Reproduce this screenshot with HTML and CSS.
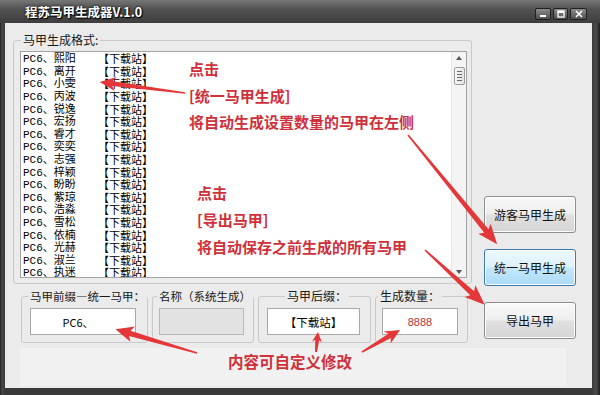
FILE: index.html
```html
<!DOCTYPE html>
<html lang="zh-CN">
<head>
  <meta charset="UTF-8" />
  <title>程苏马甲生成器V.1.0</title>
  <link rel="stylesheet" href="styles.css">
</head>
<body>

  <div class="window">
    <div class="titlebar">
      <span class="title">程苏马甲生成器V.1.0</span>
      <div class="caption">
        <span class="cap min"><svg width="8" height="8" viewBox="0 0 8 8"><rect x="1" y="5" width="6" height="2" fill="#fff"/></svg></span>
        <span class="cap max"><svg width="8" height="8" viewBox="0 0 8 8"><rect x="1" y="1" width="6" height="6" fill="none" stroke="#fff" stroke-width="1.3"/><rect x="1" y="1" width="6" height="2" fill="#fff"/></svg></span>
        <span class="cap close"><svg width="8" height="8" viewBox="0 0 8 8"><path d="M1 1 L7 7 M7 1 L1 7" stroke="#fff" stroke-width="1.6"/></svg></span>
      </div>
    </div>

    <div class="client">
      <div class="main">
        <div class="left">
          <fieldset class="group list-group">
            <legend>马甲生成格式:</legend>
            <div class="listbox">
              <ul class="items">
                <li><span class="nick"><span class="pc">PC6</span>、熙阳</span><span>【下载站】</span></li>
                <li><span class="nick"><span class="pc">PC6</span>、离开</span><span>【下载站】</span></li>
                <li><span class="nick"><span class="pc">PC6</span>、小雯</span><span>【下载站】</span></li>
                <li><span class="nick"><span class="pc">PC6</span>、丙波</span><span>【下载站】</span></li>
                <li><span class="nick"><span class="pc">PC6</span>、锐逸</span><span>【下载站】</span></li>
                <li><span class="nick"><span class="pc">PC6</span>、宏扬</span><span>【下载站】</span></li>
                <li><span class="nick"><span class="pc">PC6</span>、睿才</span><span>【下载站】</span></li>
                <li><span class="nick"><span class="pc">PC6</span>、奕奕</span><span>【下载站】</span></li>
                <li><span class="nick"><span class="pc">PC6</span>、志强</span><span>【下载站】</span></li>
                <li><span class="nick"><span class="pc">PC6</span>、梓颖</span><span>【下载站】</span></li>
                <li><span class="nick"><span class="pc">PC6</span>、盼盼</span><span>【下载站】</span></li>
                <li><span class="nick"><span class="pc">PC6</span>、紫琼</span><span>【下载站】</span></li>
                <li><span class="nick"><span class="pc">PC6</span>、浩淼</span><span>【下载站】</span></li>
                <li><span class="nick"><span class="pc">PC6</span>、雪松</span><span>【下载站】</span></li>
                <li><span class="nick"><span class="pc">PC6</span>、依楠</span><span>【下载站】</span></li>
                <li><span class="nick"><span class="pc">PC6</span>、光赫</span><span>【下载站】</span></li>
                <li><span class="nick"><span class="pc">PC6</span>、淑兰</span><span>【下载站】</span></li>
                <li><span class="nick"><span class="pc">PC6</span>、执迷</span><span>【下载站】</span></li>
                <li><span class="nick"><span class="pc">PC6</span>、晓雯</span><span>【下载站】</span></li>
              </ul>
              <div class="scrollbar">
                <span class="arrow up"></span>
                <span class="thumb"></span>
                <span class="arrow down"></span>
              </div>
            </div>
          </fieldset>

          <div class="fields">
            <fieldset class="group field f-prefix">
              <legend>马甲前缀—统一马甲：</legend>
              <div class="input">PC6、</div>
            </fieldset>
            <fieldset class="group field f-name">
              <legend>名称（系统生成）</legend>
              <div class="input disabled"></div>
            </fieldset>
            <fieldset class="group field f-suffix">
              <legend>马甲后缀：</legend>
              <div class="input">【下载站】</div>
            </fieldset>
            <fieldset class="group field f-count">
              <legend>生成数量：</legend>
              <div class="input count">8888</div>
            </fieldset>
          </div>
        </div>

        <div class="actions">
          <button class="btn">游客马甲生成</button>
          <button class="btn focus">统一马甲生成</button>
          <button class="btn">导出马甲</button>
        </div>
      </div>

      <div class="tip">内容可自定义修改</div>
    </div>

    <!-- annotations drawn over the window -->
    <div class="note note-a">点击<br>[统一马甲生成]<br>将自动生成设置数量的马甲在左侧</div>
    <div class="note note-b">点击<br>[导出马甲]<br>将自动保存之前生成的所有马甲</div>

    <svg class="arrows" width="600" height="395" viewBox="0 0 600 395">
      <path transform="translate(185 93) rotate(187.4)" d="M0,-0.8 L73,-2.3 L70,-7 L86,0 L70,7 L73,2.3 L0,0.8Z"/>
      <path transform="translate(408 135) rotate(50.8)" d="M0,-0.8 L124,-2.8 L121,-8 L141,0 L121,8 L124,2.8 L0,0.8Z"/>
      <path transform="translate(425 250) rotate(42.5)" d="M0,-0.8 L64,-2.8 L61,-8 L81,0 L61,8 L64,2.8 L0,0.8Z"/>
      <path transform="translate(197 353) rotate(196.3)" d="M0,-0.8 L70,-2.8 L67,-8 L85,0 L67,8 L70,2.8 L0,0.8Z"/>
      <path transform="translate(316 352) rotate(-84.3)" d="M0,-1 L12,-2 L10,-5 L20,0 L10,5 L12,2 L0,1Z"/>
      <path transform="translate(362 352) rotate(-30.1)" d="M0,-0.8 L32,-2.5 L29,-7 L44,0 L29,7 L32,2.5 L0,0.8Z"/>
    </svg>
  </div>

</body>
</html>
```

FILE: styles.css
```css
* {
  margin: 0;
  padding: 0;
  box-sizing: border-box;
}

body {
  width: 600px;
  height: 395px;
  overflow: hidden;
  background: #2a2a2a;
  font-family: "Noto Sans CJK SC", sans-serif;
  font-size: 12px;
  color: #000;
}

.window {
  position: relative;
  width: 600px;
  height: 395px;
  display: flex;
  flex-direction: column;
  background: linear-gradient(90deg, #1e1e1e, #4a4a4a 2px, #3a3a3a 5px, #3a3a3a 592px, #4d4d4d 596px, #1e1e1e);
}

/* Title bar */
.titlebar {
  height: 23px;
  display: flex;
  align-items: center;
  padding: 0 13px 0 25px;
  background: linear-gradient(#767676, #525252 40%, #3e3e3e);
}

.title {
  flex: 1;
  color: #fff;
  font-weight: bold;
  font-size: 12.5px;
  text-shadow: 0 0 3px #000, 1px 1px 1px #000;
}

.caption {
  display: flex;
  gap: 2px;
  align-self: flex-start;
  margin-top: 8px;
}

.cap {
  width: 16px;
  height: 12px;
  display: flex;
  align-items: center;
  justify-content: center;
  border: 1px solid #1f1f1f;
  border-radius: 2px;
  background: linear-gradient(#8c8c8c, #4f4f4f);
}

.cap.max {
  width: 15px;
}

.cap.close {
  width: 17px;
}

/* Client area */
.client {
  flex: 1;
  margin: 0 8px 7px 5px;
  padding: 10px 0 2px 8px;
  background: #ebebeb;
  display: flex;
  flex-direction: column;
}

.main {
  display: flex;
}

.left {
  width: 459px;
  display: flex;
  flex-direction: column;
  gap: 5px;
}

.group {
  border: 1px solid #c9c9c9;
  border-radius: 3px;
  min-width: 0;
}

.group legend {
  font-size: 12px;
  line-height: 14px;
  padding: 0 2px;
  margin-left: -2px;
  color: #1a1a1a;
  white-space: nowrap;
}

.list-group {
  padding: 4px 4px 5px 6px;
}

.list-group legend {
  margin-left: 1px;
}

.listbox {
  display: flex;
  height: 227px;
  background: #fff;
  border: 1px solid #a3a3a3;
}

.items {
  flex: 1;
  list-style: none;
  overflow: hidden;
  padding-left: 2px;
  font-size: 11px;
}

.items li {
  display: flex;
  align-items: center;
  height: 12.6px;
  line-height: 12px;
  white-space: nowrap;
}

.nick {
  width: 75px;
}

.pc {
  font-family: "Liberation Mono", monospace;
}

.scrollbar {
  width: 15px;
  background: #f4f4f4;
  border-left: 1px solid #e6e6e6;
  display: flex;
  flex-direction: column;
  align-items: center;
  padding: 4px 0 3px;
}

.arrow {
  width: 0;
  height: 0;
  border-left: 3.5px solid transparent;
  border-right: 3.5px solid transparent;
}

.arrow.up {
  border-bottom: 4px solid #555;
}

.arrow.down {
  border-top: 4px solid #555;
  margin-top: auto;
}

.thumb {
  width: 11px;
  height: 18px;
  margin-top: 7px;
  border: 1px solid #9c9c9c;
  border-radius: 2px;
  background:
    linear-gradient(#6a6a6a, #6a6a6a) 2px 3px / 5px 1px no-repeat,
    linear-gradient(#6a6a6a, #6a6a6a) 2px 6px / 5px 1px no-repeat,
    linear-gradient(#6a6a6a, #6a6a6a) 2px 9px / 5px 1px no-repeat,
    linear-gradient(#6a6a6a, #6a6a6a) 2px 12px / 5px 1px no-repeat,
    linear-gradient(90deg, #f8f8f8, #e2e2e2);
}

/* Bottom settings row */
.fields {
  display: flex;
  gap: 4px;
  padding-left: 8px;
}

.field {
  padding: 5px 0 7px 8px;
}

.input {
  height: 27px;
  display: flex;
  align-items: center;
  justify-content: center;
  background: #fff;
  border: 1px solid #a9a9a9;
  font-size: 11px;
  white-space: nowrap;
}

.f-prefix {
  width: 127px;
}

.f-prefix legend {
  font-size: 11.5px;
}

.f-prefix .input {
  width: 106px;
  padding-right: 10px;
}

.f-name {
  width: 102px;
  padding-left: 6px;
}

.f-name legend {
  font-size: 11.5px;
}

.f-name .input {
  width: 85px;
}

.input.disabled {
  background: #e2e2e2;
  border-color: #b8b8b8;
}

.f-suffix {
  width: 113px;
}

.f-suffix legend {
  margin-left: 18px;
}

.f-suffix .input {
  width: 93px;
  font-size: 11.5px;
}

.f-count {
  width: 93px;
  padding-left: 6px;
}

.f-count legend {
  margin-left: -4px;
}

.input.count {
  width: 76px;
  color: #b3343b;
  font-family: "Liberation Sans", sans-serif;
}

/* Buttons */
.actions {
  width: 92px;
  margin-left: 12px;
  display: flex;
  flex-direction: column;
  justify-content: flex-end;
  gap: 16px;
  padding-bottom: 4px;
}

.btn {
  height: 37px;
  border: 1px solid #8e8e8e;
  border-radius: 3px;
  background: linear-gradient(#f8f8f8, #eeeeee 48%, #e0e0e0 52%, #d5d5d5);
  box-shadow: inset 0 0 0 1px #fcfcfc;
  font-family: inherit;
  font-size: 12px;
  color: #111;
}

.btn.focus {
  border-color: #3c7bad;
  background: linear-gradient(#eef8fe, #dcf1fc 48%, #c3e8fd 52%, #acdaf5);
}

.tip {
  flex: 1;
  margin: 5px 26px 0 7px;
  padding: 3px 6px 0 0;
  background: #f1f1f1;
  text-align: center;
  color: #d0303a;
  font-weight: bold;
  font-size: 15.5px;
  line-height: 20px;
}

/* Red annotations */
.note {
  position: absolute;
  color: #d0303a;
  font-weight: bold;
  font-size: 15px;
  line-height: 26.5px;
  white-space: nowrap;
}

.note-a {
  left: 189px;
  top: 56px;
}

.note-b {
  left: 197px;
  top: 179px;
  line-height: 27px;
}

.arrows {
  position: absolute;
  left: 0;
  top: 0;
  pointer-events: none;
  fill: #e4373a;
}
```
